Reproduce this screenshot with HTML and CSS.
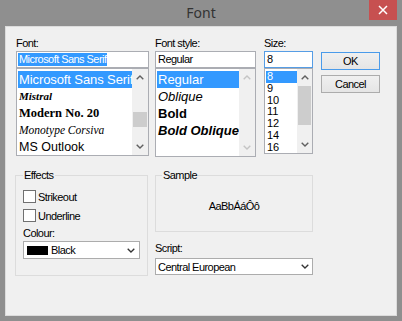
FILE: index.html
```html
<!DOCTYPE html>
<html lang="en">
<head>
  <meta charset="UTF-8" />
  <title>Font</title>
  <link rel="stylesheet" href="styles.css">
</head>
<body>
  <div class="window">
    <div class="titlebar">
      <span class="title">Font</span>
      <button class="close-btn" aria-label="Close">
        <svg width="10" height="10" viewBox="0 0 10 10"><path d="M1 1L9 9M9 1L1 9" stroke="#fff" stroke-width="1.5"/></svg>
      </button>
    </div>

    <div class="client">
      <div class="top-row">
        <!-- Fonte -->
        <div class="picker font-picker">
          <div class="label">Font:</div>
          <div class="field"><span class="selected-text">Microsoft Sans Serif</span></div>
          <div class="list">
            <ul class="items">
              <li class="active">Microsoft Sans Serif</li>
              <li class="f-mistral">Mistral</li>
              <li class="f-modern">Modern No. 20</li>
              <li class="f-corsiva">Monotype Corsiva</li>
              <li class="f-outlook">MS Outlook</li>
            </ul>
            <div class="scrollbar">
              <span class="sb-btn"><svg width="8" height="5" viewBox="0 0 8 5"><path d="M0.7 4.3L4 1L7.3 4.3" fill="none" stroke="#606060" stroke-width="1.4"/></svg></span>
              <div class="track"><div class="thumb"></div></div>
              <span class="sb-btn"><svg width="8" height="5" viewBox="0 0 8 5"><path d="M0.7 0.7L4 4L7.3 0.7" fill="none" stroke="#606060" stroke-width="1.4"/></svg></span>
            </div>
          </div>
        </div>

        <!-- Estilo -->
        <div class="picker style-picker">
          <div class="label">Font style:</div>
          <div class="field">Regular</div>
          <div class="list">
            <ul class="items">
              <li class="active">Regular</li>
              <li class="s-italic">Oblique</li>
              <li class="s-bold">Bold</li>
              <li class="s-bold s-italic">Bold Oblique</li>
            </ul>
            <div class="scrollbar disabled">
              <span class="sb-btn"><svg width="8" height="5" viewBox="0 0 8 5"><path d="M0.7 4.3L4 1L7.3 4.3" fill="none" stroke="#c4c4c4" stroke-width="1.4"/></svg></span>
              <div class="track"></div>
              <span class="sb-btn"><svg width="8" height="5" viewBox="0 0 8 5"><path d="M0.7 0.7L4 4L7.3 0.7" fill="none" stroke="#c4c4c4" stroke-width="1.4"/></svg></span>
            </div>
          </div>
        </div>

        <!-- Tamanho -->
        <div class="picker size-picker">
          <div class="label">Size:</div>
          <div class="field focused">8</div>
          <div class="list">
            <ul class="items">
              <li class="active">8</li>
              <li>9</li>
              <li>10</li>
              <li>11</li>
              <li>12</li>
              <li>14</li>
              <li>16</li>
            </ul>
            <div class="scrollbar">
              <span class="sb-btn"><svg width="8" height="5" viewBox="0 0 8 5"><path d="M0.7 4.3L4 1L7.3 4.3" fill="none" stroke="#606060" stroke-width="1.4"/></svg></span>
              <div class="track"><div class="thumb"></div></div>
              <span class="sb-btn"><svg width="8" height="5" viewBox="0 0 8 5"><path d="M0.7 0.7L4 4L7.3 0.7" fill="none" stroke="#606060" stroke-width="1.4"/></svg></span>
            </div>
          </div>
        </div>

        <div class="buttons">
          <button class="btn btn-default">OK</button>
          <button class="btn">Cancel</button>
        </div>
      </div>

      <div class="bottom-row">
        <fieldset class="group effects">
          <legend>Effects</legend>
          <div class="check-row first"><span class="checkbox"></span>Strikeout</div>
          <div class="check-row"><span class="checkbox"></span>Underline</div>
          <div class="label colour-label">Colour:</div>
          <div class="combo colour-combo">
            <span class="swatch"></span>
            <span>Black</span>
            <svg class="chevron" width="8" height="5" viewBox="0 0 8 5"><path d="M0.7 0.7L4 4L7.3 0.7" fill="none" stroke="#333" stroke-width="1.3"/></svg>
          </div>
        </fieldset>

        <div class="right-col">
          <fieldset class="group sample">
            <legend>Sample</legend>
            <div class="sample-text">AaBbÁáÔô</div>
          </fieldset>
          <div class="label script-label">Script:</div>
          <div class="combo script-combo">
            <span>Central European</span>
            <svg class="chevron" width="8" height="5" viewBox="0 0 8 5"><path d="M0.7 0.7L4 4L7.3 0.7" fill="none" stroke="#333" stroke-width="1.3"/></svg>
          </div>
        </div>
      </div>
    </div>
  </div>
</body>
</html>
```

FILE: styles.css
```css
* {
  box-sizing: border-box;
}
body {
  margin: 0;
  background: #8f8f8f;
  font-family: 'Liberation Sans', Arial, sans-serif;
  font-size: 11px;
  letter-spacing: -0.55px;
  color: #000;
}
.window {
  width: 402px;
  height: 321px;
  padding: 0 5px 5px;
  display: flex;
  flex-direction: column;
}
.titlebar {
  height: 26px;
  display: grid;
  grid-template-columns: 1fr auto 1fr;
  align-items: start;
}
.title {
  grid-column: 2;
  font-family: 'Noto Sans', sans-serif;
  font-size: 14px;
  letter-spacing: 0;
  line-height: 26px;
  color: #333;
}
.close-btn {
  grid-column: 3;
  justify-self: end;
  width: 28px;
  height: 20px;
  border: none;
  padding: 0;
  background: #c75050;
  display: flex;
  align-items: center;
  justify-content: center;
}
.client {
  flex: 1;
  background: #f0f0f0;
  border: 1px solid #dcdcdc;
  padding: 10px 0 0 9px;
}
.top-row {
  display: flex;
  align-items: flex-start;
  margin-left: 1px;
}
.picker {
  display: flex;
  flex-direction: column;
}
.font-picker { width: 133px; }
.style-picker { width: 101px; margin-left: 6px; }
.size-picker { width: 49px; margin-left: 8px; }
.label {
  height: 13px;
  line-height: 13px;
  margin-bottom: 1px;
}
.field {
  height: 17px;
  border: 1px solid #abadb3;
  background: #fff;
  padding: 1px 2px;
  line-height: 13px;
  white-space: nowrap;
  overflow: hidden;
}
.field.focused {
  border-color: #569de5;
}
.selected-text {
  display: inline-block;
  margin-left: -1px;
  padding: 0 1px;
  background: #3399ff;
  color: #fff;
}
.list {
  display: flex;
  border: 1px solid #abadb3;
  background: #fff;
}
.font-picker .list { height: 88px; }
.style-picker .list { height: 89px; }
.size-picker .list { height: 86px; }
.items {
  list-style: none;
  margin: 0;
  padding: 2px 0 0 1px;
  flex: 1;
  min-width: 0;
  overflow: hidden;
}
.items li {
  height: 17px;
  line-height: 17px;
  padding-left: 1px;
  font-size: 13px;
  letter-spacing: 0;
  white-space: nowrap;
  overflow: hidden;
}
.items li.active {
  background: #3399ff;
  color: #fff;
}
.font-picker .items li.active {
  letter-spacing: -0.1px;
}
.f-mistral {
  font-family: 'Liberation Serif', serif;
  font-style: italic;
  font-weight: bold;
}
.items .f-mistral { font-size: 11px; }
.f-modern {
  font-family: 'Liberation Serif', serif;
  font-weight: bold;
}
.items .f-modern { font-size: 12.5px; }
.f-corsiva {
  font-family: 'Liberation Serif', serif;
  font-style: italic;
}
.items .f-corsiva { font-size: 11.5px; }
.items .f-outlook { font-size: 12.5px; }
.s-italic { font-style: italic; }
.s-bold { font-weight: bold; }
.size-picker .items li {
  height: 11.8px;
  line-height: 11.8px;
  font-size: 11px;
}
.scrollbar {
  width: 16px;
  display: flex;
  flex-direction: column;
  background: #f0f0f0;
}
.size-picker .scrollbar { width: 15px; }
.sb-btn {
  height: 17px;
  display: flex;
  align-items: center;
  justify-content: center;
}
.track {
  flex: 1;
}
.thumb {
  height: 15px;
  margin: 26px 1px 0;
  background: #cdcdcd;
}
.size-picker .thumb {
  height: 39px;
  margin-top: 0;
}
.buttons {
  display: flex;
  flex-direction: column;
  gap: 5px;
  width: 59px;
  margin: 15px 0 0 8px;
}
.btn {
  height: 18px;
  padding: 0;
  font: inherit;
  letter-spacing: inherit;
  color: #000;
  background: linear-gradient(#f0f0f0, #e5e5e5);
  border: 1px solid #acacac;
}
.btn-default {
  border-color: #4a9bea;
}
.bottom-row {
  display: flex;
  margin-top: 12px;
}
.group {
  margin: 0;
  min-width: 0;
  border: 1px solid #dcdcdc;
  padding: 0 7px;
}
.group legend {
  padding: 0 1px;
  height: 13px;
  line-height: 13px;
}
.effects {
  width: 133px;
  height: 107px;
}
.check-row {
  display: flex;
  align-items: center;
  gap: 2px;
  height: 13px;
  margin-top: 6px;
}
.check-row.first {
  margin-top: 8px;
}
.checkbox {
  width: 13px;
  height: 13px;
  border: 1px solid #707070;
  background: #fff;
}
.colour-label {
  margin-top: 5px;
}
.combo {
  display: flex;
  align-items: center;
  border: 1px solid #acacac;
  background: #fff;
}
.chevron {
  margin-left: auto;
}
.colour-combo {
  height: 18px;
  padding: 0 4px 0 3px;
  gap: 3px;
}
.swatch {
  width: 21px;
  height: 9px;
  background: #000;
}
.right-col {
  width: 158px;
  margin-left: 7px;
  display: flex;
  flex-direction: column;
}
.sample {
  height: 63px;
  padding: 0 6px;
}
.sample-text {
  height: 49px;
  line-height: 49px;
  text-align: center;
}
.script-label {
  margin: 10px 0 3px;
}
.script-combo {
  height: 17px;
  padding: 0 3px 0 2px;
}
```
